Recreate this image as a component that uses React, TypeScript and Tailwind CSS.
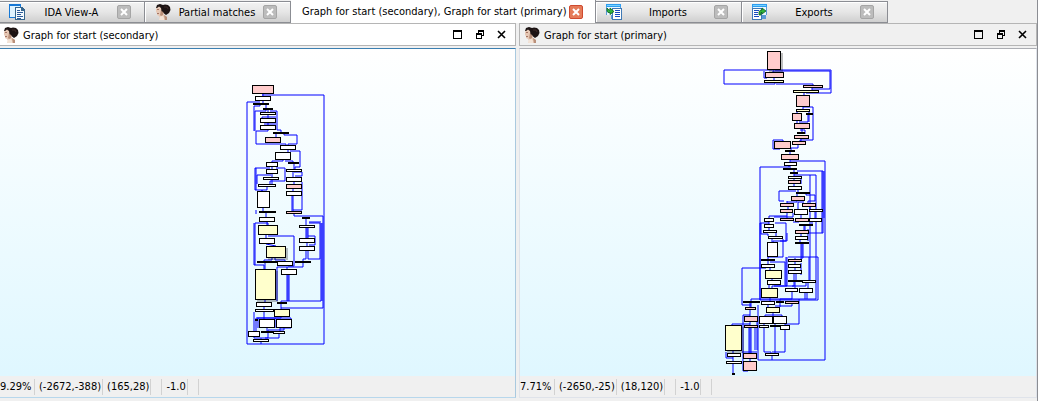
import React from "react";

type Tone = "w" | "p" | "y" | "k";
type Node = [number, number, number, number, Tone];

const FILL: Record<Tone, string> = { w: "#ffffff", p: "#ffcccc", y: "#ffffcc", k: "#000000" };

const secondaryNodes: Node[] = [
  [252, 85, 22, 9, "p"], [255, 96, 16, 5, "w"], [253, 103, 16, 2, "k"], [263, 108, 10, 2, "k"],
  [260, 112, 16, 3, "w"], [260, 118, 16, 5, "w"], [260, 125, 16, 5, "w"], [273, 132, 16, 2, "k"],
  [265, 137, 16, 6, "p"], [280, 145, 16, 5, "w"], [275, 152, 16, 8, "w"], [266, 162, 12, 5, "w"],
  [288, 162, 11, 2, "k"], [266, 169, 12, 5, "w"], [263, 177, 16, 3, "w"], [258, 184, 18, 3, "w"],
  [257, 191, 13, 17, "w"], [259, 211, 17, 2, "k"], [259, 217, 16, 5, "w"], [258, 225, 20, 10, "y"],
  [259, 238, 16, 6, "w"], [266, 246, 20, 12, "y"], [286, 169, 16, 3, "w"], [286, 177, 16, 5, "w"],
  [286, 184, 16, 5, "p"], [286, 191, 16, 5, "w"], [286, 211, 16, 3, "p"], [302, 217, 8, 2, "k"],
  [299, 225, 16, 3, "w"], [299, 238, 16, 5, "w"], [299, 246, 16, 5, "w"], [257, 261, 20, 2, "k"],
  [277, 261, 16, 5, "w"], [295, 261, 16, 2, "k"], [281, 269, 16, 6, "w"], [255, 269, 21, 31, "y"],
  [256, 302, 16, 5, "w"], [277, 302, 10, 2, "k"], [255, 309, 19, 3, "w"], [274, 309, 16, 8, "y"],
  [255, 319, 3, 2, "k"], [259, 319, 16, 9, "w"], [276, 319, 16, 9, "w"], [248, 331, 12, 6, "w"],
  [261, 331, 14, 2, "k"], [273, 331, 12, 3, "w"], [253, 339, 16, 3, "w"],
];

const secondaryEdges = [
  "M263 94V96M262 95H324V344H247V102H260M263 101V103M260 105V106H254V131",
  "M266 105V108M266 110V111H255V131M268 110V112M270 111H277V130H281V132M268 115V118M268 123V125",
  "M262 119V117H276M264 124H276M268 130V131H256V144H286V145M284 134V135H297V144H288V145M276 134V137",
  "M288 150V152M290 151H300V167H295V169M283 160V161H272V162M285 161H293V162M294 164V169",
  "M272 167V169M270 168H255V190H262V191M256 168V190M276 168H285V181H270V184M271 175H257V184",
  "M272 174V177M272 180V184M267 187V190H262V191M293 172V177M294 172H302V176H295M294 182V184",
  "M293 189V191M292 196V211M293 196V211M302 182V210H293M294 214V216H323V308H281M306 219V225",
  "M306 228V238M307 228V238M308 228V238M308 236H315V245H309M307 243V246M306 251V259H303V261",
  "M308 251V259H320V223H309M321 223V301H281V302M322 223V301M309 222H321M303 263V267H287V269",
  "M287 275V301M288 275V301M289 275V301M277 301V267H287M265 263V269M255 223H268V225M254 223V265H264V269",
  "M255 223V265M268 236H294V266H288M266 213V217M263 208V211M267 222V225M266 235V238M266 244L276 246",
  "M275 258V260H285V261M272 258V260H264V261M256 210V214M265 300V302M264 307V309M281 304V309M264 312V319",
  "M281 317V318H256V319M254 312V331M257 318H291V322M267 328V331M284 328V330H268V331M291 328H280V331",
  "M256 321V331M275 318V328M258 318V328M254 337V338H261V339M268 333V338H261M279 334V338H265M261 342V344",
];

const primaryNodes: Node[] = [
  [767, 51, 14, 19, "p"], [765, 72, 19, 6, "p"], [764, 80, 20, 3, "y"], [803, 85, 20, 3, "p"],
  [793, 90, 26, 3, "y"], [796, 95, 14, 12, "p"], [796, 109, 14, 3, "y"], [806, 113, 7, 2, "k"],
  [792, 113, 10, 8, "p"], [794, 123, 16, 6, "p"], [797, 132, 8, 2, "k"], [794, 135, 15, 4, "p"],
  [792, 141, 14, 4, "p"], [774, 141, 17, 8, "p"], [785, 150, 10, 2, "k"], [781, 154, 18, 6, "p"],
  [784, 162, 13, 4, "w"], [783, 168, 14, 2, "k"], [790, 172, 8, 2, "k"], [788, 176, 14, 3, "w"],
  [788, 180, 13, 4, "p"], [788, 186, 14, 4, "w"], [796, 192, 14, 2, "k"], [791, 196, 14, 5, "p"],
  [780, 203, 14, 4, "p"], [802, 203, 14, 4, "p"], [780, 209, 13, 4, "p"], [794, 209, 14, 6, "w"],
  [809, 209, 14, 3, "w"], [780, 218, 14, 3, "p"], [764, 218, 10, 4, "w"], [795, 218, 14, 4, "p"],
  [809, 218, 13, 4, "w"], [799, 224, 14, 2, "k"], [764, 224, 10, 4, "w"], [763, 230, 14, 3, "w"],
  [795, 230, 14, 4, "p"], [768, 236, 15, 3, "w"], [795, 236, 13, 4, "w"], [795, 242, 14, 2, "k"],
  [767, 242, 11, 15, "w"], [761, 259, 14, 2, "k"], [761, 264, 14, 4, "w"], [765, 270, 17, 9, "y"],
  [767, 280, 14, 5, "w"], [761, 288, 17, 10, "y"], [788, 259, 14, 3, "p"], [788, 264, 13, 4, "w"],
  [788, 270, 14, 4, "w"], [788, 280, 15, 2, "k"], [802, 280, 14, 3, "w"], [785, 288, 13, 4, "w"],
  [799, 288, 14, 5, "w"], [743, 301, 17, 2, "k"], [761, 301, 14, 4, "w"], [776, 301, 8, 2, "k"],
  [785, 301, 14, 3, "p"], [745, 307, 11, 3, "p"], [766, 307, 14, 6, "y"], [744, 316, 14, 6, "p"],
  [759, 316, 14, 8, "w"], [773, 316, 14, 8, "w"], [744, 325, 14, 3, "p"], [759, 325, 10, 3, "w"],
  [770, 325, 11, 2, "k"], [780, 325, 10, 5, "w"], [725, 325, 17, 26, "y"], [727, 353, 14, 4, "w"],
  [743, 353, 14, 6, "p"], [765, 353, 14, 3, "w"], [726, 361, 16, 3, "w"], [743, 361, 14, 10, "p"],
  [732, 373, 3, 2, "k"],
];

const primaryEdges = [
  "M772 70H724V84H775V83M775 70H831V93H806M773 71H830V89H812M764 71V78H767M773 70V72M774 78V80",
  "M776 84H813V85M812 88V90M804 93V95M803 107V109M803 107H813V140H800V141M809 111V113M808 115V122H799",
  "M809 115V122M797 112V113M797 121V123M802 129V132M800 130H805V134M801 139V141M798 145V148H791V150",
  "M783 141V140H773V149H780M790 152V154M790 160V162M790 161H825V360H758V305M789 166V167H760V300",
  "M790 166V168M794 170V172M797 171H823V233H806M822 171V233M824 171V218M794 174V176M794 175H816V299",
  "M794 179V180M794 184V186M798 190V192M801 184V178M796 191H779V201H784M797 194V196M806 194V195H815V201H808V203",
  "M787 201V203M797 201V202H787M804 202H798V209M788 207V209M787 213V218M810 207V209M801 215V218M815 212V218",
  "M812 222V224M761 223V234H768V236M787 216H769V218M769 222V224M769 228V230M775 223H786V241H773V242",
  "M793 213V217H774M793 222H799M776 233V236M772 239V242M804 226V230M805 226V230M801 234V236M808 229V241",
  "M760 300V223H769M800 240V242M783 239V257H768V259M787 233V241H780M801 244V259M802 244V259M803 244V258",
  "M795 258V259M787 257V286H772V288M786 257V286M788 257H818V300H760M810 175V257M809 257V280M810 257V280",
  "M795 262V264M795 268V270M801 263V275M794 274V280M796 274V280M795 282V288M794 282V286H774M808 283V288",
  "M806 283V286H792M792 292V299H780V301M805 293V299M807 293V299M751 301V299H816M751 303V307M750 303V307",
  "M766 267V268H742V305H751M768 261V264M770 268V270M770 262H785V285M772 279V280M769 285V288M770 298V301",
  "M768 305V307M792 304V306H775M799 299V324H785V325M773 313V316M765 316V315H782V316M750 310V316M780 303V307",
  "M750 322V325M749 328V353M750 328V353M751 328V353M755 328V350M750 315H743V371H748M732 325V324H750",
  "M764 324V352H771V353M775 324V353M785 330V352H772M772 356V360M733 351V353M726 352V358H733",
  "M733 357V361M733 364V373M750 359V361M757 322V350M742 352H757",
];

function Graph({ nodes, edges, shift, label }: { nodes: Node[]; edges: string[]; shift: string; label: string }) {
  return (
    <svg className="block h-full w-full" role="img" aria-label={label}>
      <g transform={shift}>
        <g fill="none" stroke="#0000ff">
          {edges.map((d) => <path key={d} d={d} />)}
        </g>
        <g shapeRendering="crispEdges">
          {nodes.map(([x, y, w, h, tone], i) => (
            <g key={i}>
              {w * h > 230 && <rect x={x + 2} y={y + 2} width={w} height={h} fill="#000" opacity=".25" />}
              <rect x={x} y={y} width={w} height={h} fill="#000" />
              {tone !== "k" && <rect x={x + 1} y={y + 1} width={w - 2} height={h - 2} fill={FILL[tone]} />}
            </g>
          ))}
        </g>
      </g>
    </svg>
  );
}

function Portrait() {
  return (
    <svg className="h-4 w-4 shrink-0" viewBox="0 0 16 16" aria-hidden="true">
      <path d="M2 3 5 2 8 4 9 8 9 11 12 13 12 16 4 16 5 14 4 12 2 11 2 9 1 8 1 5Z" fill="#e6c8b5" />
      <path d="M6 6 8 8 8 11 6 12 5 11ZM9 11 12 13 12 16 10 16Z" fill="#b98f79" />
      <path d="M5 12.500 8 12 9 14 9 16 4 16Z" fill="#f3e3d6" />
      <path d="M1 4 2 1 5 0 8 1 10 .5 13 1 15 3 15.500 6 14 9 11 11 9 9.500 8 8 6.500 7 6 4 4 2.500 2 4Z" fill="#1d1414" />
      <path d="M9 3 12 3 13 5" fill="none" stroke="#3f2a28" />
      <path d="M2 5.500h2M2 9.500h2" stroke="#94604f" strokeWidth=".8" />
    </svg>
  );
}

function PagesIcon() {
  return (
    <svg className="h-[17px] w-[17px] shrink-0" viewBox="0 0 17 17" shapeRendering="crispEdges" aria-hidden="true">
      <path d="M0 0h12v14H0z" fill="#1778d5" />
      <path d="M1 2h10v11H1z" fill="#dff3ff" />
      <path d="M6 3h7l3 3v10H6z" fill="#37668d" />
      <path d="M7 4h5v3h3v8H7z" fill="#f5fbff" />
      <path d="M8 6h3M8 8h6M8 10h4M8 12h6M8 14h4" stroke="#2e5d99" strokeWidth="1" transform="translate(0 .5)" />
    </svg>
  );
}

function TableIcon({ out = false }: { out?: boolean }) {
  return (
    <svg className="h-4 w-4 shrink-0" viewBox="0 0 16 16" aria-hidden="true">
      <g shapeRendering="crispEdges">
        <path d="M0 0h15v11h-1v4H5v-4H0z" fill="#5a9ad8" />
        <path d="M1 3h13v8H1z" fill="#eaf7ff" />
        <path d="M0 0h15v3H0z" fill="#2f9df0" />
        <path d="M1 1h13v1H1z" fill="#74d2ff" />
        <path d={out ? "M.5 4.500h9v11h-9z" : "M6.500 4.500h9v11h-9z"} fill="#fff" stroke="#3f79b5" />
        <path d={out ? "M2 6.500h5M2 8.500h4M2 10.500h4M2 12.500h5" : "M9 6.500h5M9 8.500h5M9 10.500h5M9 12.500h5"} stroke="#174bc0" />
      </g>
      <path d={out ? "M7 11V7.500L9 6H10V4L14 7 10 10V8.500H9V11Z" : "M1 4 3 6H4V4L8 7.500 4 10.500V8.500H2L1 7Z"} fill="#2fb53c" stroke="#105d22" strokeWidth=".8" />
    </svg>
  );
}

function TabClose({ label, active = false }: { label: string; active?: boolean }) {
  return (
    <button
      type="button"
      aria-label={`Close ${label}`}
      className={
        active
          ? "flex h-[14px] w-[14px] shrink-0 items-center justify-center rounded-[2px] border border-[#cf4a30] bg-[#e57b59]"
          : "flex h-[14px] w-[14px] shrink-0 items-center justify-center rounded-[2px] border border-[#a5a5a5] bg-[#bcbcbc]"
      }
    >
      <svg className="h-2 w-2" viewBox="0 0 8 8" aria-hidden="true">
        <path d="M1 1 7 7M7 1 1 7" stroke="#fff" strokeWidth="2" />
      </svg>
    </button>
  );
}

function Tab({ label, icon }: { label: string; icon: React.ReactNode }) {
  return (
    <div className="flex h-[22px] w-[146px] min-w-0 items-center self-end border border-l-0 border-[#8b8d93] bg-linear-to-b from-[#f3f3f3] via-[#e6e6e6] to-[#cfcfcf] pr-[13px] pl-[10px] shadow-[inset_1px_1px_0_#fff]">
      {icon}
      <button type="button" role="tab" aria-selected="false" className="min-w-0 flex-1 truncate pt-[2px] text-center">{label}</button>
      <TabClose label={label} />
    </div>
  );
}

function Pane({ title, active = false, children, status }: { title: string; active?: boolean; children: React.ReactNode; status: string[] }) {
  return (
    <section className="flex min-w-0 flex-col">
      <header
        className={
          active
            ? "flex h-[23px] items-center border border-l-0 border-[#b5b5b5] bg-white pr-[7px] pl-[3px]"
            : "flex h-[23px] items-center border border-[#b5b5b5] bg-[#f0f0f0] pr-[7px] pl-1"
        }
      >
        <Portrait />
        <h2 className="ml-1 min-w-0 flex-1 truncate pt-[2px]">{title}</h2>
        <div className="flex items-center gap-2">
          <button type="button" aria-label="Maximize">
            <svg className="block h-[14px] w-[14px]" viewBox="0 0 14 14" shapeRendering="crispEdges"><path d="M3 2h9v9H3z M4 4v6h7V4z" fill="#000" fillRule="evenodd" /></svg>
          </button>
          <button type="button" aria-label="Restore">
            <svg className="block h-[14px] w-[14px]" viewBox="0 0 14 14" shapeRendering="crispEdges"><path d="M6 2h6v6h-2v3H4V5h2z M7 4v1h3v2h1V4z M5 7v3h4V7z" fill="#000" fillRule="evenodd" /></svg>
          </button>
          <button type="button" aria-label="Close pane">
            <svg className="block h-[14px] w-[14px]" viewBox="0 0 14 14"><path d="M4 3 11 10M11 3 4 10" stroke="#000" strokeWidth="1.6" /></svg>
          </button>
        </div>
      </header>
      <div
        className={
          active
            ? "mt-[2px] border-t border-r border-b border-t-[#3c7fb1] border-r-[#a9c9df] border-b-[#b7d7ec]"
            : "mt-[2px] border border-t-[#abadb3] border-r-[#dfe3ea] border-b-[#dfe3ea] border-l-[#dfe3ea]"
        }
      >
        <div className="h-[327px] bg-linear-to-b from-white to-[#dff7ff]">{children}</div>
        <footer className="flex h-[21px] items-center text-black">
          {status.map((s, i) => (
            <span
              key={i}
              className={
                i === 0
                  ? "flex h-4 w-[35px] items-center border-r border-[#d2d2d2] pt-px whitespace-nowrap"
                  : s
                    ? "flex h-4 items-center border-r border-[#d2d2d2] pt-px pr-px pl-1 whitespace-nowrap"
                    : "h-4 w-[11px] border-r border-[#d2d2d2]"
              }
            >
              {s}
            </span>
          ))}
        </footer>
      </div>
    </section>
  );
}

export default function App() {
  const activeLabel = "Graph for start (secondary), Graph for start (primary)";
  return (
    <main className="min-h-screen overflow-hidden border-r border-[#8b8d93] bg-[#f0f0f0] font-['DejaVu_Sans_Condensed','DejaVu_Sans',sans-serif] text-[11px] leading-[14px] text-black">
      <div role="tablist" className="-ml-px flex h-[23px]">
        <Tab label="IDA View-A" icon={<PagesIcon />} />
        <Tab label="Partial matches" icon={<Portrait />} />
        <div className="flex h-[23px] w-[305px] items-center justify-between border-r border-[#8b8d93] bg-white pr-3 pl-[11px]">
          <button type="button" role="tab" aria-selected="true" className="pt-px whitespace-nowrap">{activeLabel}</button>
          <TabClose label={activeLabel} active />
        </div>
        <Tab label="Imports" icon={<TableIcon />} />
        <Tab label="Exports" icon={<TableIcon out />} />
      </div>
      <div className="grid grid-cols-[516fr_518fr] gap-[3px]">
        <Pane title="Graph for start (secondary)" active status={["9.29%", "(-2672,-388)", "(165,28)", "", "-1.0", ""]}>
          <Graph nodes={secondaryNodes} edges={secondaryEdges} shift="translate(0 -49)" label="Secondary flow graph" />
        </Pane>
        <Pane title="Graph for start (primary)" status={["7.71%", "(-2650,-25)", "(18,120)", "", "-1.0", ""]}>
          <Graph nodes={primaryNodes} edges={primaryEdges} shift="translate(-520 -49)" label="Primary flow graph" />
        </Pane>
      </div>
    </main>
  );
}
